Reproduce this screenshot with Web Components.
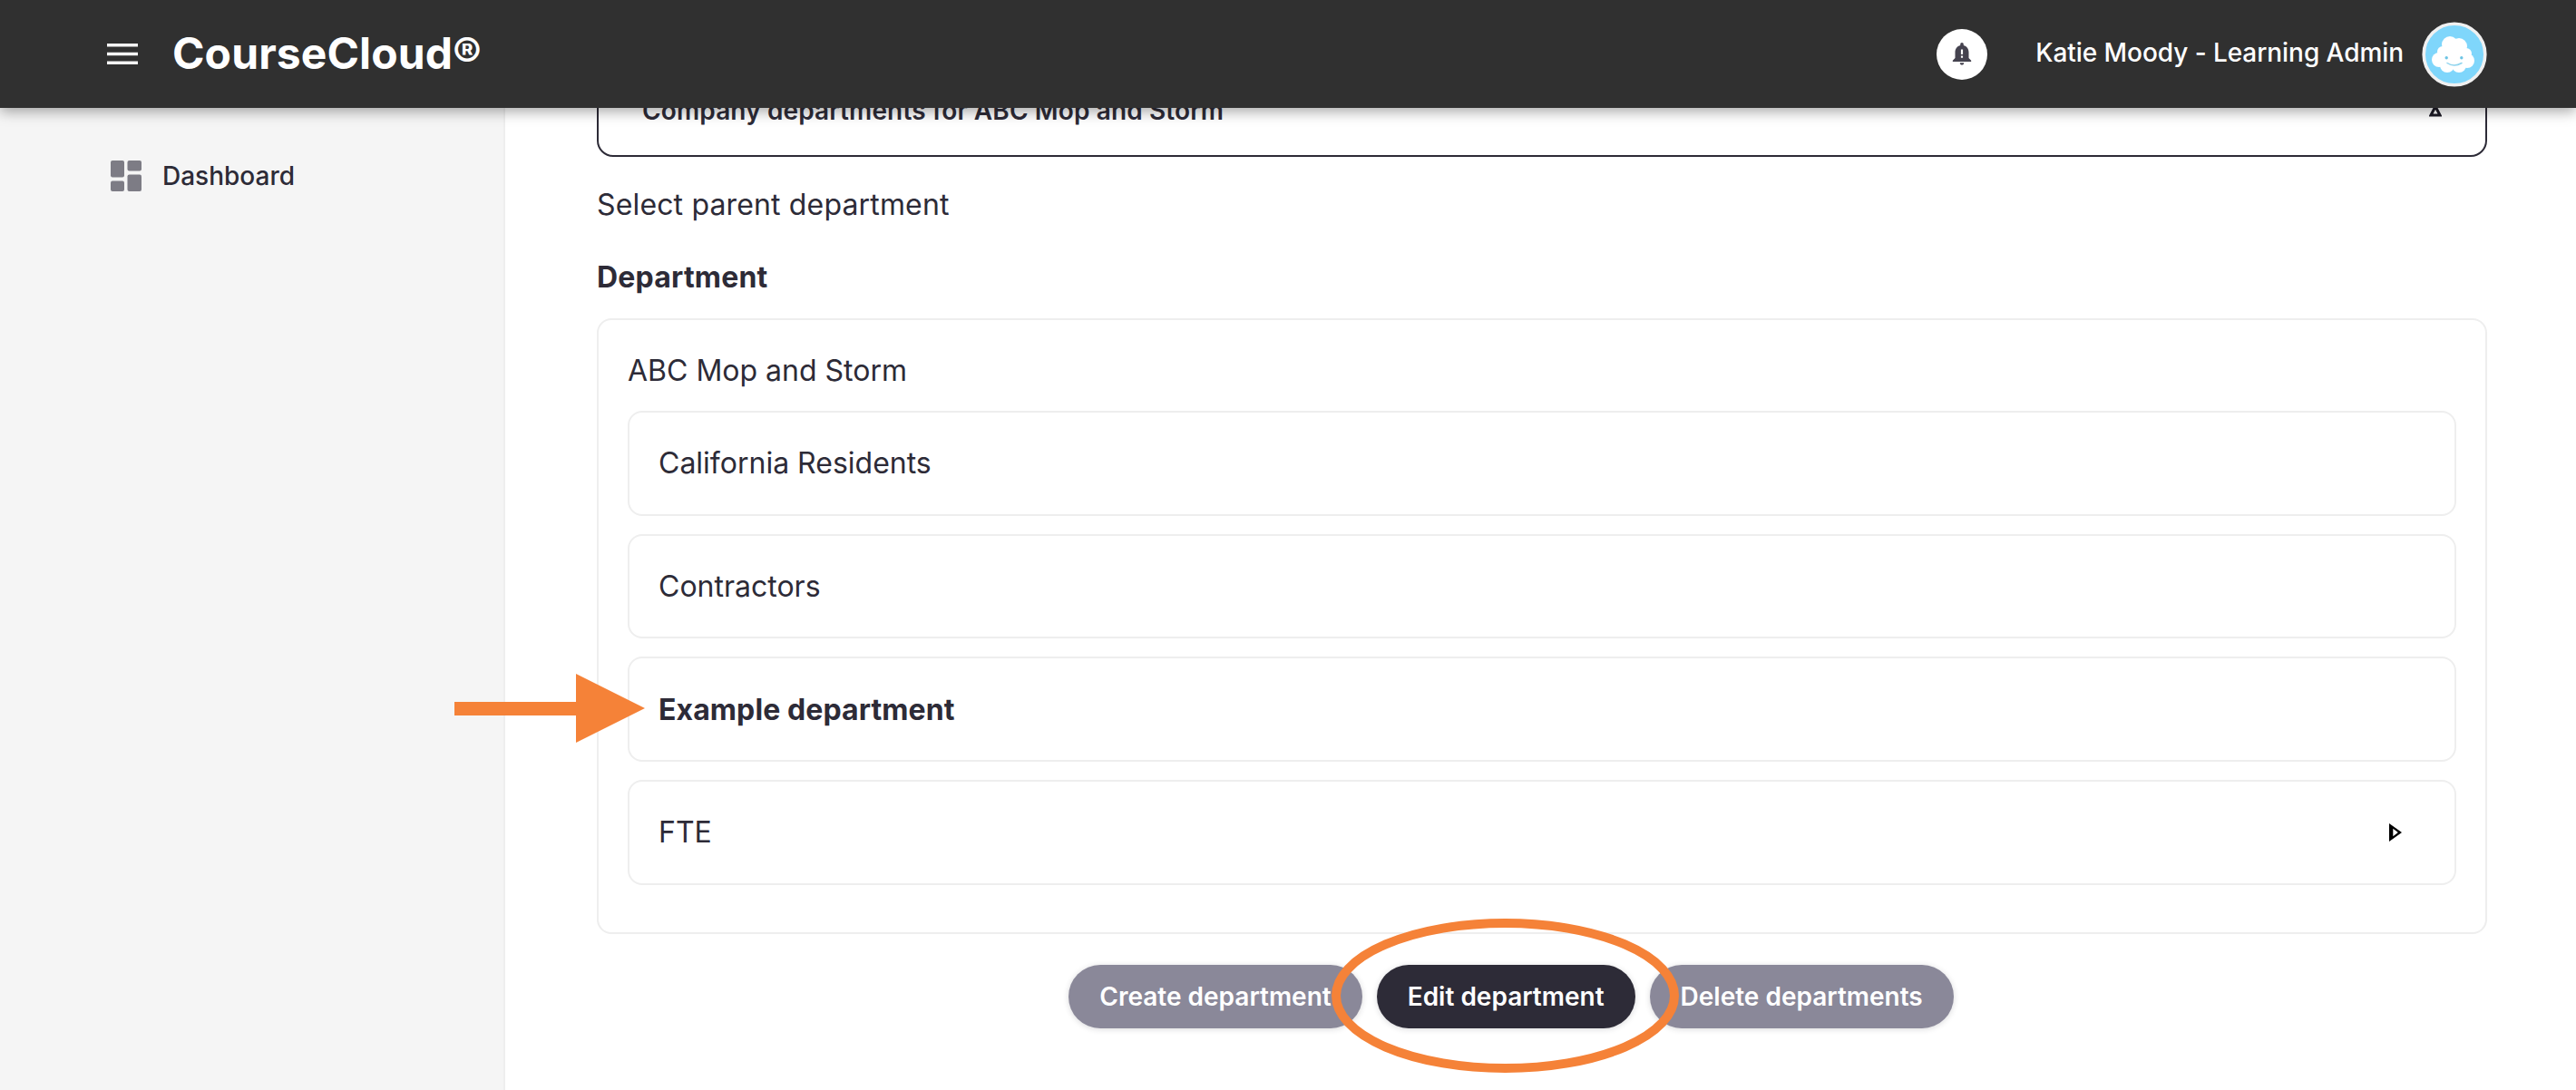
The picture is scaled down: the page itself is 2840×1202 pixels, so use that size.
<!DOCTYPE html>
<html lang="en">
<head>
<meta charset="utf-8">
<title>CourseCloud</title>
<style>
  html, body { margin: 0; height: 100%; background: #fff; }
  body { font-family: Inter, "Liberation Sans", sans-serif; color: #2d2b37; overflow: hidden; }
</style>
</head>
<body>
<cc-shell>
  <cc-header slot="header" user="Katie Moody - Learning Admin"></cc-header>
  <cc-sidebar slot="sidebar">
    <cc-nav-item>Dashboard</cc-nav-item>
  </cc-sidebar>
  <cc-accordion>Company departments for ABC Mop and Storm</cc-accordion>
  <cc-department-picker hint="Select parent department" label="Department" root="ABC Mop and Storm">
    <cc-department-row>California Residents</cc-department-row>
    <cc-department-row>Contractors</cc-department-row>
    <cc-department-row selected>Example department</cc-department-row>
    <cc-department-row expandable>FTE</cc-department-row>
  </cc-department-picker>
  <cc-actions>
    <cc-button>Create department</cc-button>
    <cc-button active>Edit department</cc-button>
    <cc-button>Delete departments</cc-button>
  </cc-actions>
  <cc-annotations slot="overlay"></cc-annotations>
</cc-shell>

<script>
// Small helper so every component reads the same way.
function shadow(el, html) {
  el.attachShadow({ mode: 'open' }).innerHTML = html;
  return el.shadowRoot;
}

class CcShell extends HTMLElement {
  constructor() {
    super();
    shadow(this, `
      <style>
        :host { display: flex; flex-direction: column; height: 100vh; position: relative; overflow: hidden; }
        [part="body"] { flex: 1; display: flex; min-height: 0; }
        [part="main"] { flex: 1; min-width: 0; padding: 0 98px 0 101px; }
      </style>
      <slot name="header"></slot>
      <div part="body">
        <slot name="sidebar"></slot>
        <div part="main"><slot></slot></div>
      </div>
      <slot name="overlay"></slot>
    `);
  }
}

class CcHeader extends HTMLElement {
  constructor() {
    super();
    shadow(this, `
      <style>
        :host {
          display: flex; align-items: center; flex: none;
          height: 119px; padding: 0 98px 0 118px;
          background: #303030; color: #fff;
          position: relative; z-index: 2;
          box-shadow: 0 4px 14px rgba(0, 0, 0, .35);
        }
        [part="menu"] { width: 34px; height: 23px; display: block; margin-right: 38px; }
        [part="brand"] { font-size: 48px; font-weight: 700; line-height: 1; margin-bottom: 2px; letter-spacing: .1px; }
        [part="bell"] {
          width: 56px; height: 56px; border-radius: 50%; background: #fff;
          margin-left: auto; margin-right: 53px;
          display: flex; align-items: center; justify-content: center;
        }
        [part="user"] { font-size: 28px; font-weight: 500; margin-right: 20px; margin-bottom: 3px; white-space: nowrap; letter-spacing: -.06px; }
        [part="avatar"] { width: 72px; height: 72px; display: block; }
      </style>
      <svg part="menu" viewBox="0 0 34 23" aria-hidden="true">
        <path d="M0 0h34v3.600H0zM0 9.700h34v3.600H0zM0 19.400h34V23H0z" fill="#f5f5f5"/>
      </svg>
      <div part="brand">CourseCloud®</div>
      <div part="bell">
        <svg width="22" height="25" viewBox="0 0 24 28" aria-hidden="true">
          <path fill="#45434f" d="M12 0a2 2 0 0 1 2 2v1.300c3.900 1 6.400 4.300 6.400 8.400V19l3 3v1.600H.6V22l3-3v-7.300c0-4.100 2.500-7.400 6.400-8.400V2a2 2 0 0 1 2-2zM9.400 25h5.200a2.600 2.600 0 0 1-5.200 0z"/>
          <path fill="#fff" d="M10.800 8.500h2.400v6h-2.400zM10.800 16.300h2.400v2.400h-2.400z"/>
        </svg>
      </div>
      <div part="user">${this.getAttribute('user')}</div>
      <svg part="avatar" viewBox="0 0 72 72" aria-hidden="true">
        <defs><filter id="soft"><feGaussianBlur stdDeviation=".7"/></filter></defs>
        <circle cx="36" cy="36" r="33.800" fill="#7fd6fb" stroke="#f0f0f0" stroke-width="3.600"/>
        <g fill="#fff" filter="url(#soft)">
          <circle cx="31" cy="25" r="9"/>
          <circle cx="41" cy="27" r="9"/>
          <circle cx="23" cy="33" r="6"/>
          <circle cx="49" cy="35" r="6"/>
          <circle cx="19" cy="42" r="8"/>
          <circle cx="50" cy="43" r="8"/>
          <circle cx="28" cy="48" r="8"/>
          <circle cx="41" cy="48" r="8"/>
          <circle cx="35" cy="38" r="13"/>
        </g>
        <circle cx="27.200" cy="39.700" r="1.700" fill="#6cc4e4"/>
        <circle cx="43.800" cy="39.700" r="1.700" fill="#6cc4e4"/>
        <path d="M28 45.500q7.500 5 16 0" fill="none" stroke="#8fd4ee" stroke-width="1.500" stroke-linecap="round"/>
      </svg>
    `);
  }
}

class CcSidebar extends HTMLElement {
  constructor() {
    super();
    shadow(this, `
      <style>
        :host {
          display: block; flex: none; box-sizing: border-box; width: 557px;
          background: #f5f5f5; border-right: 2px solid #eeeeee;
          padding: 58px 0 0 122px;
        }
      </style>
      <slot></slot>
    `);
  }
}

class CcNavItem extends HTMLElement {
  constructor() {
    super();
    shadow(this, `
      <style>
        :host { display: flex; align-items: center; gap: 23px; font-size: 28px; font-weight: 500; color: #2d2b37; }
        svg { width: 34px; height: 34px; display: block; }
      </style>
      <svg viewBox="0 0 34 34" fill="#7d7c85" aria-hidden="true">
        <rect x="0" y="0" width="15" height="18.500" rx="2"/>
        <rect x="0" y="22.400" width="15" height="11.600" rx="2"/>
        <rect x="18.500" y="0" width="15.500" height="11.600" rx="2"/>
        <rect x="18.500" y="15.500" width="15.500" height="18.500" rx="2"/>
      </svg>
      <slot></slot>
    `);
  }
}

class CcAccordion extends HTMLElement {
  constructor() {
    super();
    shadow(this, `
      <style>
        :host {
          display: flex; align-items: center; justify-content: space-between;
          box-sizing: border-box; height: 102px; margin-top: -48px;
          padding: 0 48px;
          border: 2px solid #2d2b37; border-radius: 18px;
          font-size: 28px; font-weight: 600; letter-spacing: .13px; background: #fff;
        }
        svg { width: 14px; height: 14px; display: block; }
      </style>
      <slot></slot>
      <svg viewBox="0 0 14 14" aria-hidden="true">
        <path d="M7 2.500 12 12H2z" fill="none" stroke="#1d1b26" stroke-width="3"/>
      </svg>
    `);
  }
}

class CcDepartmentPicker extends HTMLElement {
  constructor() {
    super();
    shadow(this, `
      <style>
        :host { display: block; }
        [part="hint"] { font-size: 32px; line-height: 40px; margin-top: 33px; letter-spacing: .15px; }
        [part="label"] { font-size: 32px; line-height: 40px; font-weight: 700; margin-top: 40px; letter-spacing: .2px; }
        [part="box"] {
          box-sizing: border-box; margin-top: 25px; height: 679px;
          border: 2px solid #eeeeee; border-radius: 16px;
          padding: 0 32px;
        }
        [part="root"] { font-size: 32px; line-height: 40px; padding-top: 36px; padding-bottom: 24px; }
        [part="rows"] { display: flex; flex-direction: column; gap: 20px; }
      </style>
      <div part="hint">${this.getAttribute('hint')}</div>
      <div part="label">${this.getAttribute('label')}</div>
      <div part="box">
        <div part="root">${this.getAttribute('root')}</div>
        <div part="rows"><slot></slot></div>
      </div>
    `);
  }
}

class CcDepartmentRow extends HTMLElement {
  constructor() {
    super();
    shadow(this, `
      <style>
        :host {
          display: flex; align-items: center; justify-content: space-between;
          box-sizing: border-box; height: 115.700px; padding: 0 58px 0 32px;
          border: 2px solid #eeeeee; border-radius: 16px;
          font-size: 32px;
        }
        :host([selected]) { font-weight: 700; letter-spacing: .1px; }
        svg { width: 14px; height: 20px; display: block; }
      </style>
      <slot></slot>
      ${this.hasAttribute('expandable') ? `
      <svg viewBox="0 0 14 20" aria-hidden="true">
        <path fill-rule="evenodd" d="M0 0 14 10 0 20zM4.300 5.700v8.600L9.800 10z" fill="#000"/>
      </svg>` : ''}
    `);
  }
}

class CcActions extends HTMLElement {
  constructor() {
    super();
    shadow(this, `
      <style>
        :host { display: flex; justify-content: center; gap: 16px; margin-top: 34px; padding-right: 68px; }
      </style>
      <slot></slot>
    `);
  }
}

class CcButton extends HTMLElement {
  constructor() {
    super();
    shadow(this, `
      <style>
        :host {
          display: flex; align-items: center; height: 70px; padding: 0 34px;
          border-radius: 35px; background: #8a8899; color: #fff;
          font-size: 28px; font-weight: 600; white-space: nowrap;
          box-shadow: 0 1px 6px rgba(45, 43, 55, .18);
        }
        :host([active]) { background: #2d2b37; }
      </style>
      <slot></slot>
    `);
  }
}

// The orange arrow and ring were painted over the screenshot, so they sit on top of everything.
class CcAnnotations extends HTMLElement {
  constructor() {
    super();
    shadow(this, `
      <style>
        :host { position: absolute; inset: 0; pointer-events: none; z-index: 3; }
        svg { width: 100%; height: 100%; display: block; }
      </style>
      <svg viewBox="0 0 2840 1202" aria-hidden="true">
        <path d="M501 774h134v-31l76 38-76 38v-30H501z" fill="#f58238"/>
        <ellipse cx="1659.500" cy="1098" rx="186.500" ry="80" fill="none" stroke="#f58238" stroke-width="10"/>
      </svg>
    `);
  }
}

customElements.define('cc-shell', CcShell);
customElements.define('cc-header', CcHeader);
customElements.define('cc-sidebar', CcSidebar);
customElements.define('cc-nav-item', CcNavItem);
customElements.define('cc-accordion', CcAccordion);
customElements.define('cc-department-picker', CcDepartmentPicker);
customElements.define('cc-department-row', CcDepartmentRow);
customElements.define('cc-actions', CcActions);
customElements.define('cc-button', CcButton);
customElements.define('cc-annotations', CcAnnotations);
</script>
</body>
</html>
